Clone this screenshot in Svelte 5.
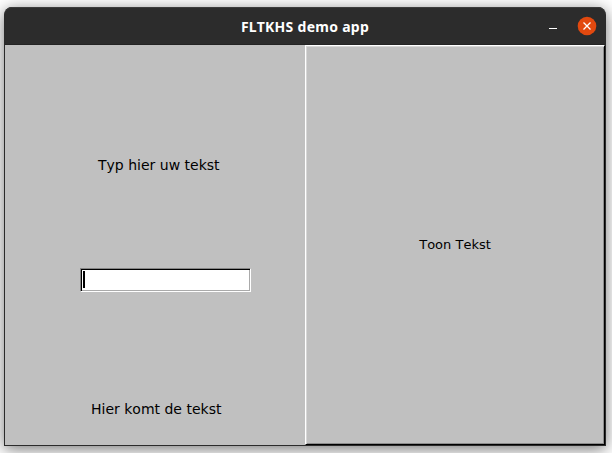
<script>
  let prompt = 'Typ hier uw tekst';
  let output = 'Hier komt de tekst';
</script>

<main>
  <section class="window">
    <header>
      <h1>FLTKHS demo app</h1>
      <div class="controls">
        <span class="minimize"></span>
        <span class="close">
          <svg width="20" height="20" viewBox="0 0 20 20">
            <circle cx="10" cy="10" r="9.3" fill="#e2490f" />
            <path d="M6.5 6.5 L13.5 13.5 M13.5 6.5 L6.5 13.5" stroke="#fff" stroke-width="1.3" />
          </svg>
        </span>
      </div>
    </header>
    <div class="content">
      <div class="left">
        <div class="label first">{prompt}</div>
        <div class="input"><span class="caret"></span></div>
        <div class="label second">{output}</div>
      </div>
      <div class="button"><span>Toon Tekst</span></div>
    </div>
  </section>
</main>

<style>
  :global(body) { background: #fff; }
  main {
    box-sizing: border-box;
    width: 612px;
    height: 453px;
    padding: 7px 6px 7px 4px;
    overflow: hidden;
    font-family: "DejaVu Sans", sans-serif;
    font-kerning: none;
    color: #000;
  }
  .window {
    box-sizing: border-box;
    width: 602px;
    height: 439px;
    display: flex;
    flex-direction: column;
    border: 1px solid #2b2b2b;
    border-top: 0;
    border-radius: 8px 8px 0 0;
    background: #2b2b2b;
    box-shadow: 0 3px 16px rgba(0, 0, 0, 0.55);
  }
  header {
    height: 38px;
    display: flex;
    align-items: center;
    box-sizing: border-box;
    border-radius: 7px 7px 0 0;
    background: #2c2c2c;
    border-top: 1px solid #3c3c3c;
    border-bottom: 1px solid #242424;
  }
  h1 {
    flex: 1;
    margin: 0 0 0 56px;
    padding-top: 2px;
    text-align: center;
    font: bold 14px/20px "Noto Sans", sans-serif;
    letter-spacing: 0.28px;
    white-space: nowrap;
    color: #fff;
  }
  .controls {
    display: flex;
    align-items: center;
    gap: 20px;
    width: 56px;
  }
  .minimize { width: 8px; height: 1px; margin-top: 4px; background: #fff; }
  .close { height: 20px; }
  .close svg { display: block; }
  .content { flex: 1; display: flex; background: #c0c0c0; }
  .left {
    width: 300px;
    display: flex;
    flex-direction: column;
  }
  .label { font-size: 14px; line-height: 18px; white-space: nowrap; }
  .first { margin: 111px 0 0 93px; }
  .input {
    box-sizing: border-box;
    width: 171px;
    height: 24px;
    margin: 94px 0 0 75px;
    padding: 1px 0 0 1px;
    background: #fff;
    border: 1px solid;
    border-color: #858585 #fff #fff #858585;
    box-shadow: inset 1px 1px #000, inset -1px -1px #aaa;
  }
  .caret { display: block; width: 2px; height: 17px; margin: 1px 0 0 1px; background: #000; }
  .second { margin: 108px 0 0 86px; }
  .button {
    box-sizing: border-box;
    width: 300px;
    display: flex;
    align-items: center;
    justify-content: center;
    padding-bottom: 2px;
    border: 1px solid;
    border-color: #fff #000 #000 #fff;
    box-shadow: inset 1px 1px #d6d6d6, inset -1px -1px #8c8c8c;
    font-size: 13px;
    white-space: nowrap;
  }
</style>
